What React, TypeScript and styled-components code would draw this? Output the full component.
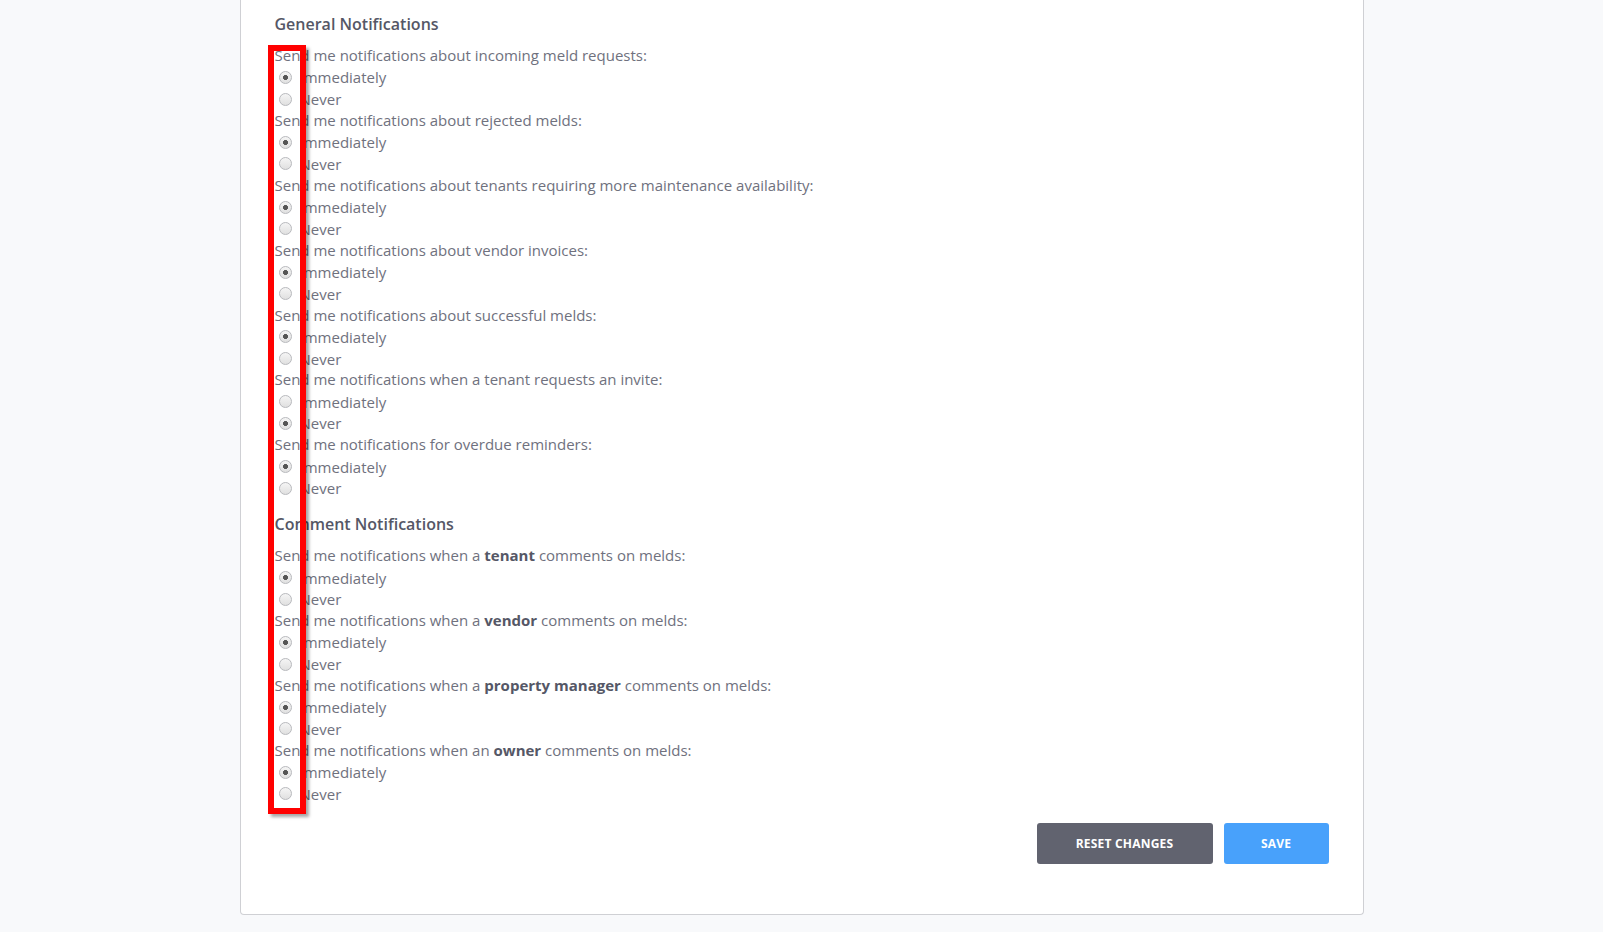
import styled, { createGlobalStyle } from "styled-components";

const GlobalStyle = createGlobalStyle`
  body {
    margin: 0;
    background: #f8f9fb;
    font-family: "Open Sans", "Liberation Sans", sans-serif;
  }
`;

const Card = styled.div`
  position: relative;
  box-sizing: border-box;
  width: 1124px;
  margin: 0 auto;
  padding: 13px 34px 50px;
  background: #ffffff;
  border: 1px solid #cfd0d4;
  border-top: none;
  border-radius: 0 0 4px 4px;
`;

const SectionTitle = styled.h3<{ $first?: boolean }>`
  margin: ${(p) => (p.$first ? "0" : "14px")} 0 10px;
  font-size: 16px;
  font-weight: 600;
  line-height: 22px;
  color: #555766;
`;

const Question = styled.div`
  font-size: 15px;
  line-height: 21.63px;
  color: #6f717e;
  b {
    font-weight: 700;
    color: #555766;
  }
`;

const Option = styled.label`
  display: flex;
  align-items: center;
  height: 21.63px;
  padding-left: 4px;
  font-size: 15px;
  color: #6f717e;
`;

const Radio = styled.input`
  appearance: none;
  box-sizing: border-box;
  width: 13px;
  height: 13px;
  margin: 0 8px 0 0;
  border-radius: 50%;
  border: 1px solid #b8b9bd;
  background: linear-gradient(#f5f5f5, #e0e0e0);
  &:checked {
    background: radial-gradient(circle, #555 0 2.2px, transparent 2.8px),
      linear-gradient(#f5f5f5, #e0e0e0);
  }
`;

const Actions = styled.div`
  display: flex;
  justify-content: flex-end;
  gap: 11px;
  margin-top: 18px;
`;

const Button = styled.button<{ $primary?: boolean }>`
  height: 41px;
  padding: 0;
  width: ${(p) => (p.$primary ? "105px" : "176px")};
  border: none;
  border-radius: 3px;
  background: ${(p) => (p.$primary ? "#48a1fb" : "#61636f")};
  color: #ffffff;
  font-family: "Open Sans", "Liberation Sans", sans-serif;
  font-size: 12px;
  font-weight: 700;
  letter-spacing: 0.2px;
  text-transform: uppercase;
`;

const Highlight = styled.div`
  position: absolute;
  left: 27px;
  top: 45px;
  width: 38px;
  height: 769px;
  box-sizing: border-box;
  border: 6px solid #ff0000;
  box-shadow: 3px 3px 3px rgba(0, 0, 0, 0.35);
  pointer-events: none;
`;

type Item = { id: string; text: React.ReactNode; never?: boolean };

const general: Item[] = [
  { id: "incoming", text: "Send me notifications about incoming meld requests:" },
  { id: "rejected", text: "Send me notifications about rejected melds:" },
  {
    id: "availability",
    text: "Send me notifications about tenants requiring more maintenance availability:",
  },
  { id: "invoices", text: "Send me notifications about vendor invoices:" },
  { id: "successful", text: "Send me notifications about successful melds:" },
  { id: "invite", text: "Send me notifications when a tenant requests an invite:", never: true },
  { id: "overdue", text: "Send me notifications for overdue reminders:" },
];

const comments: Item[] = [
  { id: "c-tenant", text: <>Send me notifications when a <b>tenant</b> comments on melds:</> },
  { id: "c-vendor", text: <>Send me notifications when a <b>vendor</b> comments on melds:</> },
  {
    id: "c-pm",
    text: <>Send me notifications when a <b>property manager</b> comments on melds:</>,
  },
  { id: "c-owner", text: <>Send me notifications when an <b>owner</b> comments on melds:</> },
];

function Group({ item }: { item: Item }) {
  return (
    <div>
      <Question>{item.text}</Question>
      <Option>
        <Radio type="radio" name={item.id} defaultChecked={!item.never} />
        Immediately
      </Option>
      <Option>
        <Radio type="radio" name={item.id} defaultChecked={item.never} />
        Never
      </Option>
    </div>
  );
}

export default function App() {
  return (
    <>
      <GlobalStyle />
      <Card>
        <SectionTitle $first>General Notifications</SectionTitle>
        {general.map((item) => (
          <Group key={item.id} item={item} />
        ))}
        <SectionTitle>Comment Notifications</SectionTitle>
        {comments.map((item) => (
          <Group key={item.id} item={item} />
        ))}
        <Actions>
          <Button>Reset Changes</Button>
          <Button $primary>Save</Button>
        </Actions>
        <Highlight />
      </Card>
    </>
  );
}
